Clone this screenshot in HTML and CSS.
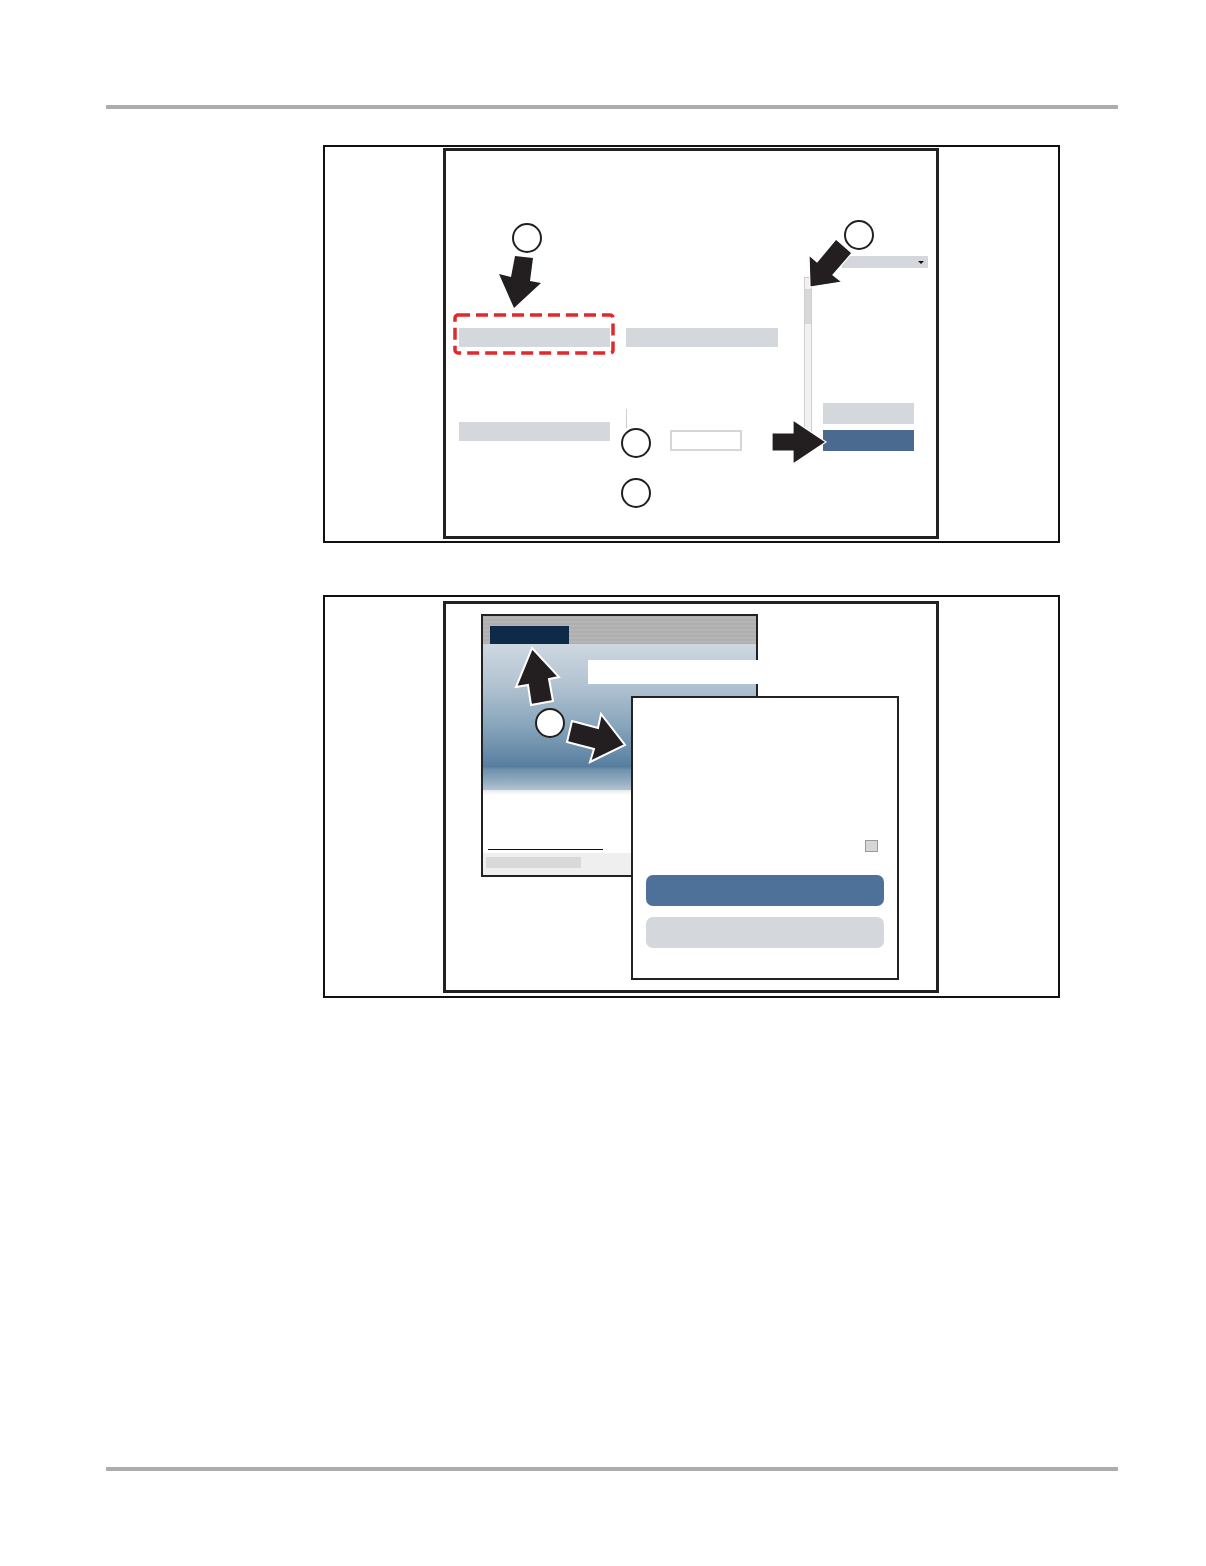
FILE: index.html
```html
<!DOCTYPE html>
<html lang="en">
<head>
    <meta charset="UTF-8">
    <title>Figure</title>
    <link rel="stylesheet" href="styles.css">
</head>
<body>
    <div class="rule rule-top"></div>

    <div class="figure figure-a">
        <div class="frame">
            <div class="bar bar-name"></div>
            <div class="bar bar-value"></div>
            <div class="bar bar-other"></div>
            <div class="divider"></div>
            <div class="field"></div>
            <div class="btn btn-gray"></div>
            <div class="btn btn-blue"></div>
            <div class="scroll"><div class="scroll-thumb"></div></div>
            <div class="dropdown"><span class="caret"></span></div>

            <svg class="callouts" width="496" height="391" viewBox="443 148 496 391">
                <rect x="455" y="315" width="158" height="38" rx="3" fill="none" stroke="#e1282d" stroke-width="3.5" stroke-dasharray="12 6"/>
                <polygon points="515,256 533,258 530,281 541,283 514,308 499,274 511,277" fill="#231f20"/>
                <polygon points="852,253 833,275 842,282 810,287 809,255 817,262 836,239" fill="#231f20" stroke="#fff" stroke-width="1.2"/>
                <polygon points="772,433 793,433 793,420 826,442 793,464 793,451 772,451" fill="#231f20" stroke="#fff" stroke-width="1.2"/>
                <circle cx="527" cy="238" r="14" fill="#fff" stroke="#231f20" stroke-width="2"/>
                <circle cx="859" cy="235" r="14" fill="#fff" stroke="#231f20" stroke-width="2"/>
                <circle cx="636" cy="443" r="14" fill="#fff" stroke="#231f20" stroke-width="2"/>
                <circle cx="636" cy="493" r="14" fill="#fff" stroke="#231f20" stroke-width="2"/>
            </svg>
        </div>
    </div>

    <div class="figure figure-b">
        <div class="frame frame-b">
            <div class="app">
                <div class="app-title"><div class="app-tab"></div></div>
                <div class="app-hero"><div class="app-search"></div></div>
                <div class="app-body"><div class="app-link"></div></div>
                <div class="app-foot"><div class="app-status"></div></div>
            </div>
            <div class="dialog">
                <div class="dialog-check"><span class="checkbox"></span></div>
                <div class="dialog-btn dialog-btn-main"></div>
                <div class="dialog-btn"></div>
            </div>

            <svg class="callouts" width="496" height="392" viewBox="443 601 496 392">
                <polygon points="532,648 559,677 549,679 553,701 531,705 528,685 516,687" fill="#231f20" stroke="#fff" stroke-width="2"/>
                <polygon points="572,721 598,728 601,714 625,745 590,762 594,749 567,742" fill="#231f20" stroke="#fff" stroke-width="2"/>
                <circle cx="550" cy="723" r="14" fill="#fff" stroke="#231f20" stroke-width="2"/>
            </svg>
        </div>
    </div>

    <div class="rule rule-bottom"></div>
</body>
</html>
```

FILE: styles.css
```css
*{
    margin: 0;
    padding: 0;
}
body{
    background: #fff;
    font-family: "Liberation Sans", Arial, sans-serif;
}
.rule{
    width: 1012px;
    height: 4px;
    margin-left: 106px;
    background: #acacac;
}
.rule-top{
    margin-top: 105px;
}
.rule-bottom{
    margin-top: 469px;
}

.figure{
    box-sizing: border-box;
    width: 737px;
    margin-left: 323px;
    border: 2px solid #111;
}
.figure-a{
    margin-top: 36px;
    height: 398px;
    padding: 1px 0 0 118px;
}
.figure-b{
    margin-top: 52px;
    height: 403px;
    padding: 4px 0 0 118px;
}
.frame{
    box-sizing: border-box;
    width: 496px;
    height: 391px;
    border: 3px solid #222;
    position: relative;
    background: #fff;
}
.frame-b{
    height: 392px;
}
.callouts{
    position: absolute;
    left: -3px;
    top: -3px;
    overflow: visible;
}

/* top screen */
.bar, .btn, .divider, .field, .scroll, .dropdown{
    position: absolute;
}
.bar{
    width: 151px;
    height: 19px;
    background: #d4d7db;
}
.bar-name{ left: 13px; top: 177px; }
.bar-value{ left: 180px; top: 177px; width: 152px; }
.bar-other{ left: 13px; top: 271px; }
.divider{
    left: 180px;
    top: 258px;
    width: 1px;
    height: 19px;
    background: #cfcfcf;
}
.field{
    box-sizing: border-box;
    left: 224px;
    top: 279px;
    width: 72px;
    height: 21px;
    border: 2px solid #d6d6d6;
    background: #fff;
}
.btn{
    left: 377px;
    width: 91px;
    height: 21px;
}
.btn-gray{
    top: 252px;
    background: #d4d7db;
}
.btn-blue{
    top: 279px;
    background: #4a6b8f;
}
.scroll{
    box-sizing: border-box;
    left: 358px;
    top: 126px;
    width: 8px;
    height: 156px;
    border: 1px solid #cfcfcf;
    background: #f1f1f1;
}
.scroll-thumb{
    margin-top: 11px;
    height: 35px;
    background: #d8d8d8;
}
.dropdown{
    left: 396px;
    top: 105px;
    width: 86px;
    height: 12px;
    background: #d4d7db;
}
.caret{
    position: absolute;
    right: 4px;
    top: 5px;
    border-left: 3px solid transparent;
    border-right: 3px solid transparent;
    border-top: 3px solid #111;
}

/* bottom screen */
.app{
    position: absolute;
    left: 35px;
    top: 10px;
    box-sizing: border-box;
    width: 277px;
    height: 263px;
    border: 2px solid #222;
    background: #fff;
}
.app-title{
    height: 28px;
    padding: 10px 0 0 7px;
    box-sizing: border-box;
    background: repeating-linear-gradient(to bottom, #adadad 0, #b8b8b8 2px, #ababab 4px), #b0b0b0;
}
.app-tab{
    width: 79px;
    height: 18px;
    background: #0e2a48;
}
.app-hero{
    box-sizing: border-box;
    height: 146px;
    padding: 16px 0 0 105px;
    background: linear-gradient(to bottom, #cdd8e1 0%, #b2c3d1 28%, #89a6bc 55%, #5b81a2 82%, #577d9e 84%, #6f91ad 86%, #97afc3 95%, #b3c4d2 100%);
}
.app-search{
    height: 24px;
    margin-right: -2px;
    background: #fff;
}
.app-body{
    box-sizing: border-box;
    height: 63px;
    padding: 59px 0 0 5px;
    background: linear-gradient(to bottom, #e6e9ec 0, #fff 5px);
}
.app-link{
    width: 115px;
    height: 1px;
    background: #111;
}
.app-foot{
    box-sizing: border-box;
    height: 22px;
    padding: 4px 3px;
    background: #efefef;
}
.app-status{
    width: 95px;
    height: 11px;
    background: #d9d9d9;
}

.dialog{
    position: absolute;
    left: 185px;
    top: 92px;
    box-sizing: border-box;
    width: 268px;
    height: 284px;
    border: 2px solid #222;
    background: #fff;
    display: flex;
    flex-direction: column;
    padding: 142px 19px 0 13px;
}
.dialog-check{
    display: flex;
    justify-content: flex-end;
}
.checkbox{
    box-sizing: border-box;
    width: 13px;
    height: 12px;
    border: 1.5px solid #9a9a9a;
    background: #d6d6d6;
}
.dialog-btn{
    width: 238px;
    height: 31px;
    margin-top: 11px;
    border-radius: 7px;
    background: #d4d7db;
}
.dialog-btn-main{
    margin-top: 23px;
    background: #4d7199;
}
```
